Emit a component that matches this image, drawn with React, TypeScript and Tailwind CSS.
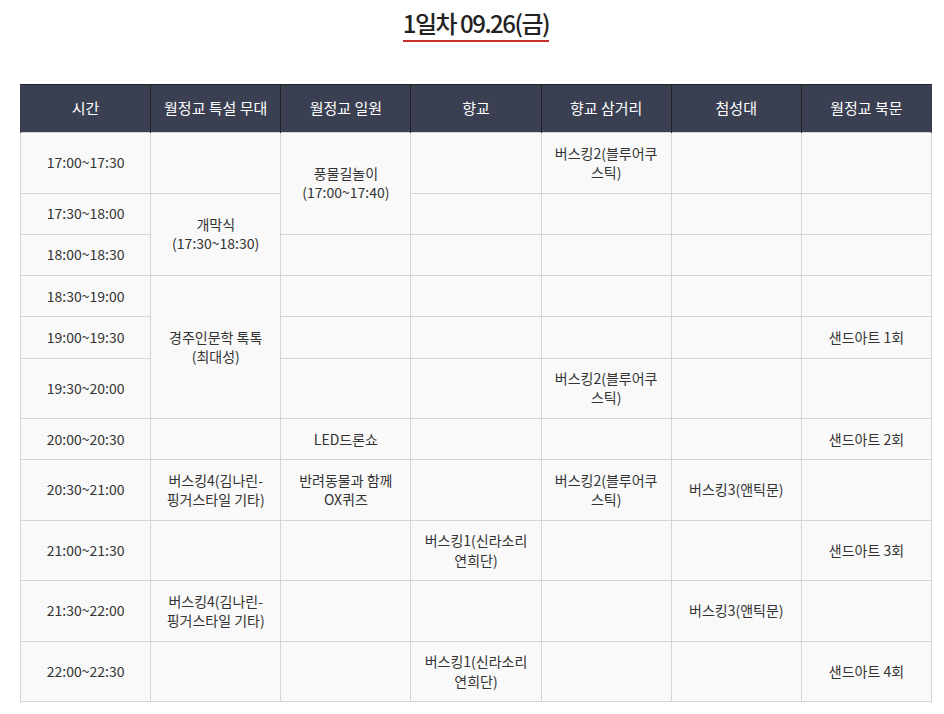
type Cell = { text?: string[]; rowSpan?: number } | null;

const headers = ["시간", "월정교 특설 무대", "월정교 일원", "향교", "향교 삼거리", "첨성대", "월정교 북문"];

const busking2 = ["버스킹2(블루어쿠", "스틱)"];
const busking4 = ["버스킹4(김나린-", "핑거스타일 기타)"];
const busking1 = ["버스킹1(신라소리", "연희단)"];

// null = covered by a rowspan above
const rows: { time: string; cells: Cell[] }[] = [
  {
    time: "17:00~17:30",
    cells: [{}, { text: ["풍물길놀이", "(17:00~17:40)"], rowSpan: 2 }, {}, { text: busking2 }, {}, {}],
  },
  {
    time: "17:30~18:00",
    cells: [{ text: ["개막식", "(17:30~18:30)"], rowSpan: 2 }, null, {}, {}, {}, {}],
  },
  { time: "18:00~18:30", cells: [null, {}, {}, {}, {}, {}] },
  {
    time: "18:30~19:00",
    cells: [{ text: ["경주인문학 톡톡", "(최대성)"], rowSpan: 3 }, {}, {}, {}, {}, {}],
  },
  { time: "19:00~19:30", cells: [null, {}, {}, {}, {}, { text: ["샌드아트 1회"] }] },
  { time: "19:30~20:00", cells: [null, {}, {}, { text: busking2 }, {}, {}] },
  { time: "20:00~20:30", cells: [{}, { text: ["LED드론쇼"] }, {}, {}, {}, { text: ["샌드아트 2회"] }] },
  {
    time: "20:30~21:00",
    cells: [
      { text: busking4 },
      { text: ["반려동물과 함께", "OX퀴즈"] },
      {},
      { text: busking2 },
      { text: ["버스킹3(앤틱문)"] },
      {},
    ],
  },
  { time: "21:00~21:30", cells: [{}, {}, { text: busking1 }, {}, {}, { text: ["샌드아트 3회"] }] },
  { time: "21:30~22:00", cells: [{ text: busking4 }, {}, {}, {}, { text: ["버스킹3(앤틱문)"] }, {}] },
  { time: "22:00~22:30", cells: [{}, {}, { text: busking1 }, {}, {}, { text: ["샌드아트 4회"] }] },
];

function Lines({ text }: { text?: string[] }) {
  if (!text) return null;
  return (
    <>
      {text.map((t, i) => (
        <span key={i} className="block">
          {t}
        </span>
      ))}
    </>
  );
}

export default function App() {
  return (
    <div
      className="min-h-screen bg-white"
      style={{ fontFamily: '"Noto Sans CJK KR", "Noto Sans", sans-serif' }}
    >
      <div className="ml-[20px] w-[912px] pt-[7px]">
        {/* Title */}
        <div className="text-center">
          <h2 className="inline-block border-b-2 border-[#c9302c] pb-[1px] text-[24px] leading-[32px] font-medium tracking-[-1.5px] text-[#222]">
            1일차 09.26(금)
          </h2>
        </div>

        {/* Schedule */}
        <table className="mt-[42px] w-full table-fixed border-collapse text-center text-[14px] leading-[1.375] text-[#333]">
          <thead>
            <tr className="border-t border-[#222] bg-[#3a3f52]">
              {headers.map((h) => (
                <th
                  key={h}
                  className="h-[48px] border-x border-[#222] px-2 text-[15px] font-normal text-white first:border-l-[#3a3f52] last:border-r-[#3a3f52]"
                >
                  {h}
                </th>
              ))}
            </tr>
          </thead>
          <tbody className="bg-[#f9f9f9]">
            {rows.map((row) => (
              <tr key={row.time}>
                <td className="border border-[#d6d6d6] px-2 py-[10.5px]">{row.time}</td>
                {row.cells.map((c, i) =>
                  c === null ? null : (
                    <td
                      key={i}
                      rowSpan={c.rowSpan}
                      className="border border-[#d6d6d6] px-2 py-[10.5px]"
                    >
                      <Lines text={c.text} />
                    </td>
                  )
                )}
              </tr>
            ))}
          </tbody>
        </table>
      </div>
    </div>
  );
}
